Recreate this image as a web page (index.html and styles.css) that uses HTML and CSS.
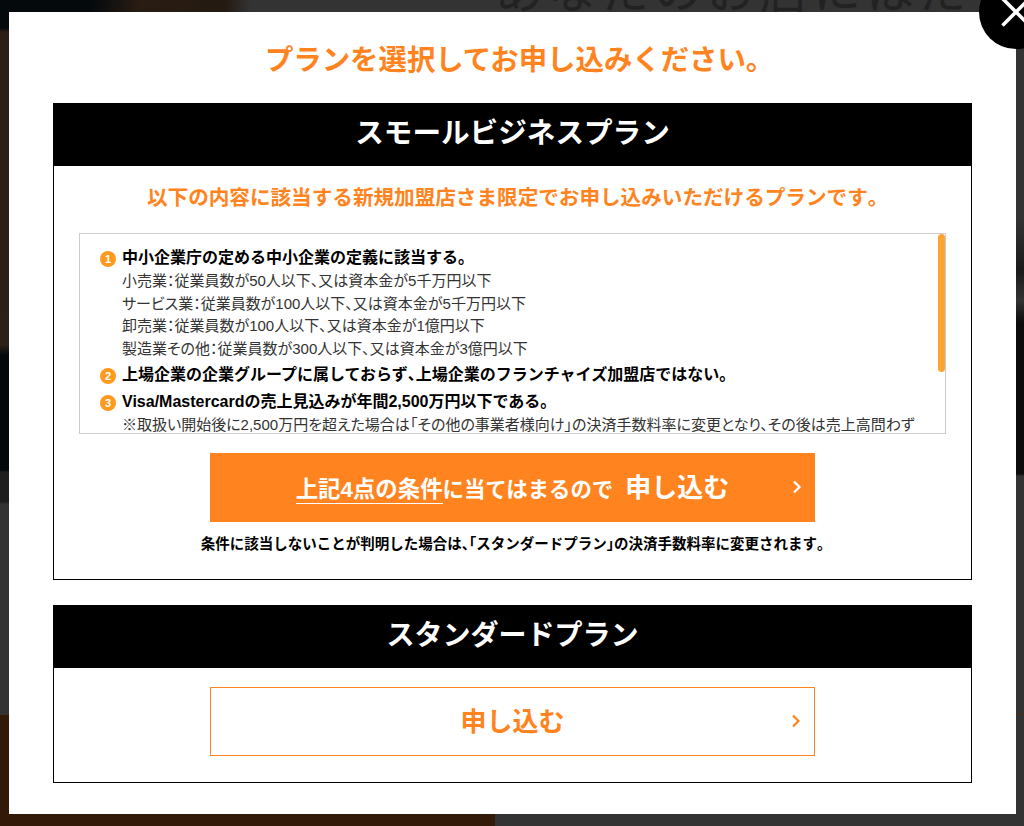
FILE: index.html
```html
<!DOCTYPE html>
<html lang="ja">
<head>
    <meta charset="UTF-8">
    <title>プランを選択してお申し込みください。</title>
    <link rel="stylesheet" href="styles.css">
</head>
<body>
    <div class="backdrop">
        <div class="bg-top"></div>
        <p class="bg-copy">あなたのお店にはたらき</p>
        <div class="bg-left"></div>
        <div class="bg-right"></div>
        <div class="bg-bottom"></div>
    </div>
    <div class="modal">
        <h1 class="modal-title">プランを選択してお申し込みください<span class="h">。</span></h1>
        <section class="plan">
            <h2 class="plan-head">スモールビジネスプラン</h2>
            <div class="plan-body">
                <p class="plan-lead">以下の内容に該当する新規加盟店さま限定でお申し込みいただけるプランです<span class="h">。</span></p>
                <div class="terms">
                    <div class="terms-inner">
                        <div class="term">
                            <span class="num">1</span>
                            <div>
                                <p class="term-title">中小企業庁の定める中小企業の定義に該当する<span class="h">。</span></p>
                                <p class="term-line">小売業：従業員数が50人以下、又は資本金が5千万円以下</p>
                                <p class="term-line">サービス業：従業員数が100人以下、又は資本金が5千万円以下</p>
                                <p class="term-line">卸売業：従業員数が100人以下、又は資本金が1億円以下</p>
                                <p class="term-line">製造業その他：従業員数が300人以下、又は資本金が3億円以下</p>
                            </div>
                        </div>
                        <div class="term">
                            <span class="num">2</span>
                            <div>
                                <p class="term-title">上場企業の企業グループに属しておらず<span class="h">、</span>上場企業のフランチャイズ加盟店ではない<span class="h">。</span></p>
                            </div>
                        </div>
                        <div class="term">
                            <span class="num">3</span>
                            <div>
                                <p class="term-title">Visa/Mastercardの売上見込みが年間2,500万円以下である<span class="h">。</span></p>
                                <p class="term-line">※取扱い開始後に2,500万円を超えた場合は「その他の事業者様向け」の決済手数料率に変更となり、その後は売上高問わず</p>
                            </div>
                        </div>
                    </div>
                    <div class="scroll-thumb"></div>
                </div>
                <a class="btn btn-fill" href="#">
                    <span class="btn-text"><span class="btn-under">上記4点の条件</span>に当てはまるので<span class="btn-big">申し込む</span></span>
                    <svg class="chev" width="10" height="14" viewBox="0 0 10 14"><path d="M2 1.5 L7.5 7 L2 12.5" fill="none" stroke="currentColor" stroke-width="2.2"/></svg>
                </a>
                <p class="plan-note">条件に該当しないことが判明した場合は<span class="h">、「</span>スタンダードプラン<span class="h">」</span>の決済手数料率に変更されます<span class="h">。</span></p>
            </div>
        </section>
        <section class="plan plan-std">
            <h2 class="plan-head">スタンダードプラン</h2>
            <div class="plan-body">
                <a class="btn btn-line" href="#">
                    <span class="btn-text"><span class="btn-big">申し込む</span></span>
                    <svg class="chev" width="10" height="14" viewBox="0 0 10 14"><path d="M2 1.5 L7.5 7 L2 12.5" fill="none" stroke="currentColor" stroke-width="2.2"/></svg>
                </a>
            </div>
        </section>
        <a class="close" href="#" aria-label="閉じる">
            <svg width="30" height="30" viewBox="0 0 30 30"><path d="M1.5 1.5 L28.5 28.5 M28.5 1.5 L1.5 28.5" fill="none" stroke="#fff" stroke-width="3.6"/></svg>
        </a>
    </div>
</body>
</html>
```

FILE: styles.css
```css
* {
    box-sizing: border-box;
}
html,
body {
    margin: 0;
    height: 100%;
}
body {
    position: relative;
    height: 826px;
    overflow: hidden;
    background: #333;
    font-family: "Liberation Sans", "Noto Sans CJK JP", sans-serif;
    color: #000;
}
p,
h1,
h2 {
    margin: 0;
}
a {
    text-decoration: none;
}
/* half width punctuation */
.h {
    font-feature-settings: "halt";
}

/* dimmed page behind the modal */
.backdrop {
    position: absolute;
    inset: 0;
}
.bg-top {
    position: absolute;
    left: 0;
    top: 0;
    width: 260px;
    height: 12px;
    background: linear-gradient(to right, #04090c 0 90px, #2a1c12 140px, #241a12 225px, #333 250px);
}
.bg-copy {
    position: absolute;
    left: 495px;
    top: -38px;
    font-size: 48px;
    line-height: 60px;
    letter-spacing: 5px;
    font-weight: 400;
    color: #222;
    white-space: nowrap;
}
.bg-left {
    position: absolute;
    left: 0;
    top: 0;
    width: 9px;
    height: 715px;
    background: linear-gradient(to bottom, #04090c 0 28px, #2a1e16 32px, #2c2118 345px, #03080b 355px, #03080b 470px, #1e1e1e 472px, #1e1e1e 502px, #333 504px);
}
.bg-right {
    position: absolute;
    right: 0;
    top: 0;
    width: 8px;
    height: 826px;
    background: linear-gradient(to bottom, #333 0 220px, #1a1a1a 270px, #333 300px, #0c0c0c 322px, #0c0c0c 474px, #333 476px, #333 714px, #4a2a12 714px, #4a2a12 715px, #333 715px);
}
.bg-bottom {
    position: absolute;
    left: 0;
    top: 715px;
    width: 495px;
    height: 111px;
    background: #331a08;
}
.modal {
    position: absolute;
    left: 9px;
    top: 12px;
    width: 1007px;
    height: 802px;
    padding: 28px 44px 0;
    background: #fff;
}
.modal-title {
    height: 63px;
    font-size: 28.4px;
    line-height: 40px;
    font-weight: 700;
    color: #ff8420;
    text-align: center;
}
.plan {
    border: 1px solid #000;
    height: 477px;
}
.plan-std {
    margin-top: 25px;
    height: 178px;
}
.plan-head {
    height: 62px;
    background: #000;
    color: #fff;
    font-size: 28.6px;
    line-height: 59px;
    font-weight: 700;
    text-align: center;
}
.plan-std .plan-head {
    font-size: 28px;
    line-height: 60px;
}
.plan-body {
    display: flex;
    flex-direction: column;
    align-items: center;
    padding: 18px 25px 0;
}
.plan-lead {
    font-size: 20.6px;
    line-height: 28px;
    font-weight: 700;
    color: #ff8420;
    text-align: center;
}
.terms {
    position: relative;
    width: 867px;
    height: 201px;
    margin-top: 21px;
    border: 1px solid #ccc;
    overflow: hidden;
}
.terms-inner {
    padding: 12px 20px 0;
}
.term {
    display: flex;
    gap: 6px;
    margin-bottom: 3px;
}
.term-title {
    font-size: 16px;
    line-height: 24px;
    font-weight: 700;
}
.term-line {
    font-size: 15px;
    line-height: 22.5px;
    color: #333;
    white-space: nowrap;
    font-feature-settings: "palt";
}
.num {
    flex: none;
    width: 16px;
    height: 16px;
    margin-top: 5px;
    border-radius: 50%;
    background: #ff9a1f;
    color: #fff;
    font-size: 11px;
    line-height: 16px;
    font-weight: 700;
    text-align: center;
}
.scroll-thumb {
    position: absolute;
    right: 0;
    top: 0;
    width: 7px;
    height: 138px;
    border-radius: 4px;
    background: #ffa333;
}
.btn {
    position: relative;
    display: flex;
    align-items: center;
    justify-content: center;
    width: 605px;
    height: 69px;
    padding-bottom: 4px;
}
.btn-fill {
    margin-top: 19px;
    background: #ff8420;
    color: #fff;
}
.btn-line {
    margin-top: 1px;
    border: 1px solid #ff8420;
    color: #ff8420;
}
.btn-text {
    font-size: 21.4px;
    font-weight: 700;
}
.btn-under {
    border-bottom: 1px solid #fff;
    padding-bottom: 1px;
    font-size: 22.4px;
}
.btn-big {
    margin-left: 12px;
    font-size: 26px;
}
.btn-line .btn-big {
    margin-left: 0;
}
.chev {
    position: absolute;
    right: 13px;
    top: 50%;
    margin-top: -8px;
}
.plan-note {
    margin-top: 12px;
    font-size: 14.5px;
    line-height: 20px;
    font-weight: 700;
    text-align: center;
}
.close {
    position: absolute;
    right: -37px;
    top: -37px;
    display: flex;
    align-items: center;
    justify-content: center;
    width: 74px;
    height: 74px;
    border-radius: 50%;
    background: #000;
}
```
